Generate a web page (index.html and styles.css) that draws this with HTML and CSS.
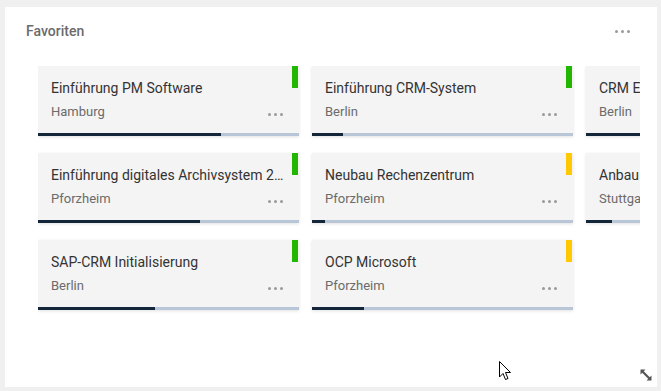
FILE: index.html
```html
<!DOCTYPE HTML>
<html>

<head>
    <meta charset='utf-8'>
    <link rel="stylesheet" href="styles.css">
</head>

<body>
    <div class="widget">

        <!--Kopfzeile-->
        <div class="widgetHeader">
            <span class="widgetTitle">Favoriten</span>
            <span class="dots headerDots"><i></i><i></i><i></i></span>
        </div>

        <!--Karten-->
        <div class="cardViewport">
            <div class="cardGrid">
                <div class="card">
                    <span class="status green"></span>
                    <div class="cardTitle">Einführung PM Software</div>
                    <div class="cardRow">
                        <span class="cardPlace">Hamburg</span>
                        <span class="dots"><i></i><i></i><i></i></span>
                    </div>
                    <div class="progress"><div class="progressValue" style="width:70%"></div></div>
                </div>
                <div class="card">
                    <span class="status green"></span>
                    <div class="cardTitle">Einführung CRM-System</div>
                    <div class="cardRow">
                        <span class="cardPlace">Berlin</span>
                        <span class="dots"><i></i><i></i><i></i></span>
                    </div>
                    <div class="progress"><div class="progressValue" style="width:12%"></div></div>
                </div>
                <div class="card">
                    <span class="status green"></span>
                    <div class="cardTitle">CRM Einführung</div>
                    <div class="cardRow">
                        <span class="cardPlace">Berlin</span>
                        <span class="dots"><i></i><i></i><i></i></span>
                    </div>
                    <div class="progress"><div class="progressValue" style="width:90%"></div></div>
                </div>

                <div class="card">
                    <span class="status green"></span>
                    <div class="cardTitle">Einführung digitales Archivsystem 2020</div>
                    <div class="cardRow">
                        <span class="cardPlace">Pforzheim</span>
                        <span class="dots"><i></i><i></i><i></i></span>
                    </div>
                    <div class="progress"><div class="progressValue" style="width:62%"></div></div>
                </div>
                <div class="card">
                    <span class="status yellow"></span>
                    <div class="cardTitle">Neubau Rechenzentrum</div>
                    <div class="cardRow">
                        <span class="cardPlace">Pforzheim</span>
                        <span class="dots"><i></i><i></i><i></i></span>
                    </div>
                    <div class="progress"><div class="progressValue" style="width:5%"></div></div>
                </div>
                <div class="card">
                    <span class="status yellow"></span>
                    <div class="cardTitle">Anbau Lagerhalle</div>
                    <div class="cardRow">
                        <span class="cardPlace">Stuttgart</span>
                        <span class="dots"><i></i><i></i><i></i></span>
                    </div>
                    <div class="progress"><div class="progressValue" style="width:10%"></div></div>
                </div>

                <div class="card">
                    <span class="status green"></span>
                    <div class="cardTitle">SAP-CRM Initialisierung</div>
                    <div class="cardRow">
                        <span class="cardPlace">Berlin</span>
                        <span class="dots"><i></i><i></i><i></i></span>
                    </div>
                    <div class="progress"><div class="progressValue" style="width:45%"></div></div>
                </div>
                <div class="card">
                    <span class="status yellow"></span>
                    <div class="cardTitle">OCP Microsoft</div>
                    <div class="cardRow">
                        <span class="cardPlace">Pforzheim</span>
                        <span class="dots"><i></i><i></i><i></i></span>
                    </div>
                    <div class="progress"><div class="progressValue" style="width:20%"></div></div>
                </div>
            </div>
        </div>

        <!--Größe ändern-->
        <svg class="resizeHandle" width="12" height="12" viewBox="0 0 12 12">
            <path d="M2.5 2.5 L9.5 9.5" stroke="#555" stroke-width="2.2" />
            <path d="M0.5 0.5 H5.5 L0.5 5.5 Z" fill="#555" />
            <path d="M11.5 11.5 H6.5 L11.5 6.5 Z" fill="#555" />
        </svg>
    </div>

    <!--Mauszeiger-->
    <svg class="cursor" width="13" height="20" viewBox="0 0 13 20">
        <path d="M0.5 0.5 L0.5 16 L4 12.5 L6.5 18.5 L9 17.5 L6.5 11.5 L11.5 11.5 Z" fill="#fff" stroke="#000" stroke-width="1" stroke-linejoin="round" />
    </svg>
</body>

</html>
```

FILE: styles.css
```css
body {
    margin: 0;
    padding: 7px 4px 4px 5px;
    background-color: #f0f0f0;
    font-family: Roboto, "Liberation Sans", sans-serif;
}

.widget {
    position: relative;
    width: 652px;
    height: 380px;
    background-color: white;
}

.widgetHeader {
    height: 48px;
    display: flex;
    align-items: center;
    justify-content: space-between;
    padding: 0 27px 0 21px;
}

.widgetTitle {
    font-size: 14px;
    font-weight: 500;
    color: #6b6b6b;
}

.dots {
    display: flex;
    gap: 3px;
}

.dots i {
    width: 3px;
    height: 3px;
    border-radius: 50%;
    background-color: #9a9a9a;
}

.headerDots {
    margin-top: 1px;
}

.cardViewport {
    margin: 11px 0 0 33px;
    width: 602px;
    overflow: hidden;
}

.cardGrid {
    display: grid;
    grid-template-columns: repeat(3, 261px);
    grid-auto-rows: 70px;
    gap: 17px 13px;
    padding-bottom: 4px;
}

.card {
    position: relative;
    display: flex;
    flex-direction: column;
    background-color: #f4f4f4;
    box-shadow: 0 1px 3px rgba(0, 0, 0, 0.12);
}

.status {
    position: absolute;
    top: 0;
    right: 1px;
    width: 6px;
    height: 22px;
}

.green {
    background-color: #22b600;
}

.yellow {
    background-color: #ffc800;
}

.cardTitle {
    padding: 12px 15px 0 13px;
    font-size: 14px;
    line-height: 20px;
    color: #333;
    white-space: nowrap;
    overflow: hidden;
    text-overflow: ellipsis;
}

.cardRow {
    display: flex;
    justify-content: space-between;
    align-items: flex-start;
    padding: 5px 16px 0 13px;
}

.cardPlace {
    font-size: 13px;
    line-height: 18px;
    color: #6b6b6b;
}

.cardRow .dots {
    margin-top: 10px;
}

.progress {
    margin-top: auto;
    height: 3px;
    background-color: #b8c6d8;
}

.progressValue {
    height: 100%;
    background-color: #14263a;
}

.resizeHandle {
    position: absolute;
    right: 5px;
    bottom: 6px;
}

.cursor {
    position: absolute;
    left: 499px;
    top: 361px;
}
```
